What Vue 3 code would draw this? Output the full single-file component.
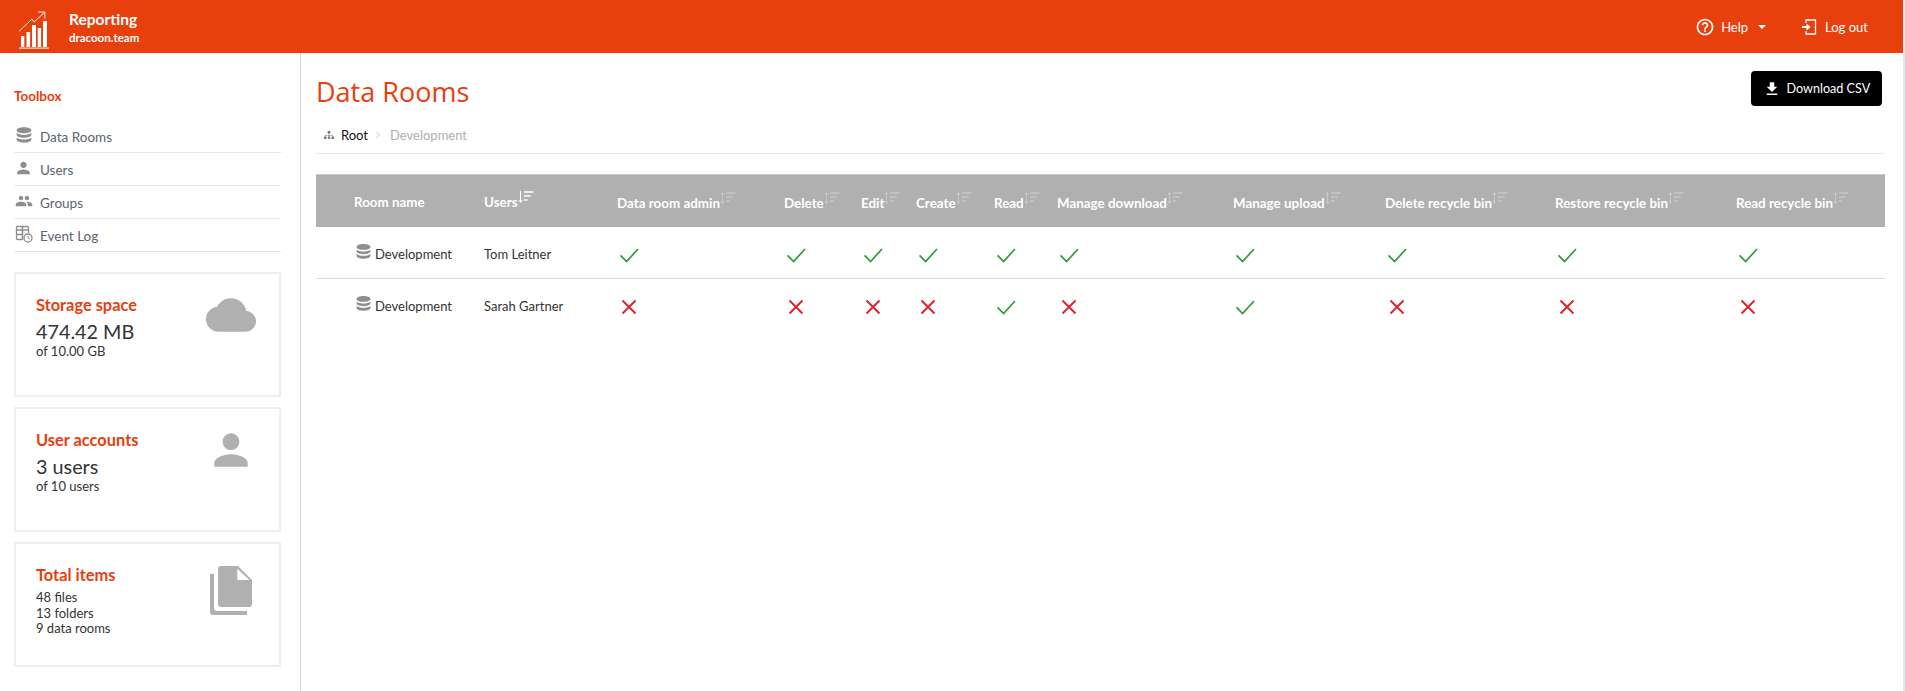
<script setup>
const columns = [
  { label: 'Room name', w: 168, plain: true },
  { label: 'Users', w: 133, active: true, plain: true },
  { label: 'Data room admin', w: 167 },
  { label: 'Delete', w: 77 },
  { label: 'Edit', w: 55 },
  { label: 'Create', w: 78 },
  { label: 'Read', w: 63 },
  { label: 'Manage download', w: 176 },
  { label: 'Manage upload', w: 152 },
  { label: 'Delete recycle bin', w: 170 },
  { label: 'Restore recycle bin', w: 181 },
  { label: 'Read recycle bin', w: 149 }
]
const rows = [
  { room: 'Development', user: 'Tom Leitner', perms: [1, 1, 1, 1, 1, 1, 1, 1, 1, 1] },
  { room: 'Development', user: 'Sarah Gartner', perms: [0, 0, 0, 0, 1, 0, 1, 0, 0, 0] }
]
const nav = ['Data Rooms', 'Users', 'Groups', 'Event Log']
const dbPath = 'M8 1C4.5 1 1.5 2 1.5 3.7S4.500 6.400 8 6.400s6.500-1 6.500-2.700S11.500 1 8 1zM1.500 6v1.800c0 1.700 3 2.700 6.500 2.700s6.500-1 6.500-2.700V6c-1.300 1.300-3.900 1.900-6.500 1.900S2.800 7.300 1.500 6zm0 4.200V12c0 1.700 3 2.800 6.500 2.800s6.500-1.100 6.500-2.800v-1.800c-1.300 1.300-3.900 1.900-6.500 1.900s-5.200-.6-6.500-1.900z'
</script>

<template>
  <div class="page">
    <div class="shell">
      <header class="topbar">
        <div class="brand">
          <svg class="logo" width="32" height="40" viewBox="0 0 32 40" fill="none">
            <g fill="#fff">
              <rect x="3" y="26" width="3.300" height="11" />
              <rect x="8.500" y="22" width="3.600" height="15" />
              <rect x="14" y="15" width="4" height="22" />
              <rect x="19.700" y="18" width="3.400" height="19" />
              <rect x="25" y="11" width="4" height="26" />
              <rect x="1" y="37.600" width="30" height="1" />
            </g>
            <path d="M1 21.300 14 9l2 3L26.600 2.300M20 2h6.800v6.700" stroke="#fff" stroke-width=".9" />
          </svg>
          <div class="brand-text">
            <div class="brand-title">Reporting</div>
            <div class="brand-sub">dracoon.team</div>
          </div>
        </div>
        <nav class="top-actions">
          <a class="top-link help">
            <svg width="20" height="20" viewBox="0 0 24 24" fill="#fff"><path d="M11 18h2v-2h-2v2zm1-16C6.480 2 2 6.480 2 12s4.480 10 10 10 10-4.480 10-10S17.520 2 12 2zm0 18c-4.410 0-8-3.590-8-8s3.590-8 8-8 8 3.590 8 8-3.590 8-8 8zm0-14c-2.210 0-4 1.790-4 4h2c0-1.100.9-2 2-2s2 .9 2 2c0 2-3 1.750-3 5h2c0-2.250 3-2.500 3-5 0-2.210-1.790-4-4-4z" /></svg>
            <span>Help</span>
            <i class="caret"></i>
          </a>
          <a class="top-link logout">
            <svg width="15" height="16" viewBox="0 0 15 16" fill="none"><path d="M4 4V1h9.500v14H4v-3" stroke="#fff" stroke-width="1.300" /><path d="M0 7h4.500V4.500L8.700 8l-4.200 3.500V9H0z" fill="#fff" /></svg>
            <span>Log out</span>
          </a>
        </nav>
      </header>

      <div class="body">
        <aside class="sidebar">
          <h2 class="toolbox">Toolbox</h2>
          <ul class="nav">
            <li v-for="(item, i) in nav" :key="item">
              <span class="nav-icon">
                <svg v-if="i === 0" width="18" height="18" viewBox="0 0 16 16" fill="#8e8e8e"><path :d="dbPath" /></svg>
                <svg v-else-if="i === 1" width="24" height="24" viewBox="0 0 24 24" fill="#8e8e8e"><path d="M12 12c2.210 0 4-1.790 4-4s-1.790-4-4-4-4 1.790-4 4 1.790 4 4 4zm0 2c-2.670 0-8 1.340-8 4v2h16v-2c0-2.660-5.330-4-8-4z" /></svg>
                <svg v-else-if="i === 2" width="18" height="18" viewBox="0 0 24 24" fill="#8e8e8e"><path d="M16 11c1.660 0 2.990-1.340 2.990-3S17.660 5 16 5c-1.660 0-3 1.340-3 3s1.340 3 3 3zm-8 0c1.660 0 2.990-1.340 2.990-3S9.660 5 8 5C6.340 5 5 6.340 5 8s1.340 3 3 3zm0 2c-2.330 0-7 1.170-7 3.500V19h14v-2.500c0-2.330-4.670-3.500-7-3.500zm8 0c-.29 0-.62.02-.97.05 1.160.84 1.970 1.970 1.970 3.450V19h6v-2.500c0-2.330-4.670-3.500-7-3.500z" /></svg>
                <svg v-else width="18" height="18" viewBox="0 0 18 18" fill="none"><path d="M8 14.500H2.500a1 1 0 0 1-1-1v-11a1 1 0 0 1 1-1h10a1 1 0 0 1 1 1V8" stroke="#8e8e8e" stroke-width="1.300" /><path d="M2 5h11M7.500 1.500V14M2 9.500h6" stroke="#8e8e8e" stroke-width="1.500" /><circle cx="13" cy="13" r="4" fill="#fff" stroke="#8e8e8e" stroke-width="1.300" /><path d="M13 10.800V13l1.600 1" stroke="#8e8e8e" /></svg>
              </span>
              <span class="nav-label">{{ item }}</span>
            </li>
          </ul>

          <section class="card">
            <div class="card-text">
              <h3>Storage space</h3>
              <div class="value">474.42 MB</div>
              <div class="sub">of 10.00 GB</div>
            </div>
            <svg class="card-icon" width="50" height="50" viewBox="0 0 24 24" fill="#b0b0b0"><path d="M19.350 10.040C18.670 6.590 15.640 4 12 4 9.110 4 6.600 5.640 5.350 8.040 2.340 8.360 0 10.910 0 14c0 3.310 2.690 6 6 6h13c2.760 0 5-2.240 5-5 0-2.640-2.050-4.780-4.650-4.960z" /></svg>
          </section>
          <section class="card">
            <div class="card-text">
              <h3>User accounts</h3>
              <div class="value">3 users</div>
              <div class="sub">of 10 users</div>
            </div>
            <svg class="card-icon" width="50" height="50" viewBox="0 0 24 24" fill="#b0b0b0"><path d="M12 12c2.210 0 4-1.790 4-4s-1.790-4-4-4-4 1.790-4 4 1.790 4 4 4zm0 2c-2.670 0-8 1.340-8 4v2h16v-2c0-2.660-5.330-4-8-4z" /></svg>
          </section>
          <section class="card">
            <div class="card-text">
              <h3>Total items</h3>
              <div class="items">
                <div>48 files</div>
                <div>13 folders</div>
                <div>9 data rooms</div>
              </div>
            </div>
            <svg class="card-icon files" width="54" height="54" viewBox="0 0 54 54" fill="#b0b0b0">
              <path fill-rule="evenodd" d="M17 2h17l14 14v24a3 3 0 0 1-3 3H17a3 3 0 0 1-3-3V5a3 3 0 0 1 3-3zm16.300 2.700V16h12z" />
              <path d="M6 10h4v34a3 3 0 0 0 3 3h30v4H9a3 3 0 0 1-3-3z" />
            </svg>
          </section>
        </aside>

        <main class="content">
          <div class="title-row">
            <h1>Data Rooms</h1>
            <button class="csv" type="button">
              <svg width="18" height="18" viewBox="0 0 24 24" fill="#fff"><path d="M19 9h-4V3H9v6H5l7 7 7-7zM5 18v2h14v-2H5z" /></svg>
              <span>Download CSV</span>
            </button>
          </div>

          <div class="crumbs">
            <svg width="10" height="9" viewBox="0 0 10 9" fill="#777"><rect x="3.700" y="0" width="2.600" height="2.600" /><rect x="0" y="5.500" width="2.400" height="2.500" /><rect x="3.800" y="5.500" width="2.400" height="2.500" /><rect x="7.600" y="5.500" width="2.400" height="2.500" /><path d="M4.700 2.600h.6V4h3.500v1.500h-.6V4.600H5.300v.9h-.6v-.9H1.800v.9h-.6V4h3.500z" /></svg>
            <a class="root">Root</a>
            <svg class="sep" width="6" height="8" viewBox="0 0 6 8" fill="none"><path d="M1.500 1l3 3-3 3" stroke="#c8c8c8" /></svg>
            <span class="here">Development</span>
          </div>

          <table class="grid">
            <colgroup>
              <col v-for="c in columns" :key="c.label" :style="{ width: c.w + 'px' }" />
            </colgroup>
            <thead>
              <tr>
                <th v-for="c in columns" :key="c.label" :class="{ plain: c.plain }">
                  <span class="th-label">{{ c.label }}</span>
                  <svg v-if="c.label !== 'Room name'" class="sort" :class="{ on: c.active }" width="16" height="13" viewBox="0 0 16 13" fill="none" stroke="#fff">
                    <path v-if="c.active" d="M2.500 0v11M.8 9l1.700 2.500L4.200 9" stroke-width="1" />
                    <path v-else d="M2.500 .5v11M.8 9l1.700 2.500L4.200 9M.8 3l1.700-2.500L4.200 3" stroke-width="1" />
                    <path d="M6 1h9.500M6 5h6.500M6 9h3.500" stroke-width="1.300" />
                  </svg>
                </th>
              </tr>
            </thead>
            <tbody>
              <tr v-for="(r, ri) in rows" :key="ri">
                <td class="room">
                  <span class="room-cell">
                    <svg width="17" height="17" viewBox="0 0 16 16" fill="#8e8e8e"><path :d="dbPath" /></svg>
                    {{ r.room }}
                  </span>
                </td>
                <td>{{ r.user }}</td>
                <td v-for="(p, pi) in r.perms" :key="pi" class="perm">
                  <svg v-if="p" width="24" height="20" viewBox="0 0 24 20" fill="none"><path d="M3.600 10.300l6 6.200L21 4" stroke="#2f9a3c" stroke-width="1.700" /></svg>
                  <svg v-else width="24" height="20" viewBox="0 0 24 20" fill="none"><path d="M5.500 3.500l13 13M18.500 3.500l-13 13" stroke="#e0202c" stroke-width="1.900" /></svg>
                </td>
              </tr>
            </tbody>
          </table>
        </main>
      </div>
    </div>
    <div class="rail"></div>
  </div>
</template>

<style scoped>
* { box-sizing: border-box; }
.page {
  display: flex;
  height: 691px;
  overflow: hidden;
  font-family: Lato, "Open Sans", sans-serif;
  font-size: 14px;
  color: #333;
  background: #fff;
}
.shell { flex: 1; min-width: 0; display: flex; flex-direction: column; }
.rail { width: 2px; background: #e6e6e6; }

.topbar {
  height: 53px;
  flex: none;
  background: #e8400c;
  color: #fff;
  display: flex;
  align-items: center;
  justify-content: space-between;
  padding: 0 35px 0 18px;
}
.brand { display: flex; align-items: center; gap: 19px; }
.logo { display: block; margin-top: 8px; margin-bottom: 2px; }
.brand-text { padding-top: 2px; }
.brand-title { font-weight: 700; font-size: 15.500px; line-height: 20px; }
.brand-sub { font-weight: 700; font-size: 11.500px; line-height: 16px; margin-top: 1px; }
.top-actions { display: flex; align-items: center; }
.top-link { display: flex; align-items: center; font-size: 13px; }
.help { margin-right: 36px; }
.help span { margin-left: 6px; }
.caret {
  margin-left: 10px;
  width: 0; height: 0;
  border-left: 4px solid transparent;
  border-right: 4px solid transparent;
  border-top: 4px solid #fff;
}
.logout span { margin-left: 8px; }

.body { flex: 1; display: flex; min-height: 0; }
.sidebar {
  width: 301px;
  flex: none;
  border-right: 1px solid #d4d4d4;
  padding: 35px 19px 0 14px;
}
.toolbox {
  margin: 0;
  font-size: 13.500px;
  line-height: 16px;
  font-weight: 700;
  color: #e8400c;
}
.nav { list-style: none; margin: 16px 0 20px; padding: 0; }
.nav li {
  height: 33px;
  display: flex;
  align-items: center;
  border-bottom: 1px solid #e9e9e9;
  color: #5b6270;
  font-size: 13.500px;
}
.nav-label { padding-top: 2px; }
.nav-icon {
  width: 26px;
  flex: none;
  display: flex;
  justify-content: center;
  padding-right: 7px;
  margin-top: -3px;
}

.card {
  height: 125px;
  margin-bottom: 10px;
  border: 2px solid #eeeeee;
  padding: 20px 23px 0 20px;
  display: flex;
  justify-content: space-between;
  align-items: flex-start;
}
.card h3 {
  margin: 0;
  font-size: 16.400px;
  line-height: 22px;
  font-weight: 700;
  color: #e8400c;
}
.value { font-size: 19.800px; line-height: 26px; margin-top: 2px; color: #333; }
.sub { font-size: 13px; line-height: 15px; color: #333; }
.items { font-size: 13px; line-height: 15.500px; margin-top: 4px; color: #333; }
.card-icon { flex: none; margin-top: -4px; }
.files { margin-right: -2px; margin-top: 0; }

.content { flex: 1; min-width: 0; padding: 18px 18px 0 15px; }
.title-row { display: flex; justify-content: space-between; align-items: flex-start; height: 42px; }
h1 {
  margin: 0;
  font-family: "Open Sans", sans-serif;
  font-size: 27px;
  line-height: 42px;
  font-weight: 500;
  color: #e8400c;
}
.csv {
  height: 35px;
  width: 131px;
  margin-right: 3px;
  padding: 0 0 0 12px;
  display: flex;
  align-items: center;
  gap: 5.500px;
  background: #000;
  color: #fff;
  border: 0;
  border-radius: 4px;
  font-family: inherit;
  font-size: 12.600px;
  white-space: nowrap;
}
.crumbs {
  height: 41px;
  display: flex;
  align-items: center;
  border-bottom: 1px solid #e9e9e9;
  padding: 4px 0 0 8px;
  font-size: 13px;
}
.root { color: #111; margin-left: 7px; }
.sep { margin: 0 9px 0 7px; }
.here { color: #b0b0b0; }

.grid {
  margin-top: 20px;
  width: 1569px;
  table-layout: fixed;
  border-collapse: collapse;
}
.grid thead tr { background: #b0b0b0; }
.grid th {
  height: 52px;
  padding: 3px 0 0;
  text-align: left;
  border-top: 1px solid #c6c6c6;
  color: #fff;
  font-size: 13.400px;
  font-weight: 700;
  white-space: nowrap;
}
.grid th.plain { padding-top: 1px; }
.grid th:first-child { padding-left: 38px; }
.th-label { vertical-align: middle; }
.sort { vertical-align: middle; margin-top: -9px; opacity: .3; }
.sort.on { opacity: 1; }
.grid td {
  height: 52px;
  padding: 2px 0 0;
  font-size: 13px;
  color: #333;
  border-bottom: 1px solid #dcdcdc;
  white-space: nowrap;
}
.grid tbody tr:first-child td { padding-top: 4px; }
.grid tbody tr:last-child td { border-bottom: 0; }
.grid td.room { padding-left: 39px; }
.room-cell { display: flex; align-items: center; gap: 3px; }
.room-cell svg { margin-top: -5px; }
.perm svg { display: block; margin-top: 2px; }
</style>
